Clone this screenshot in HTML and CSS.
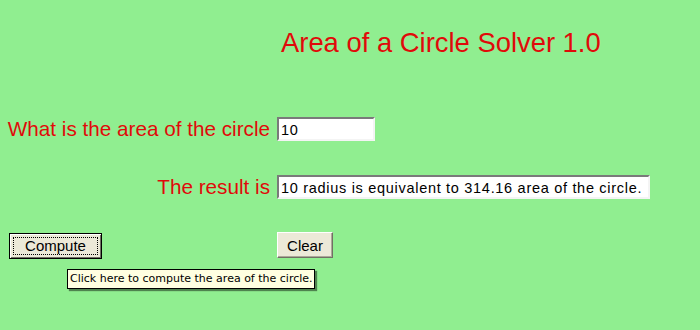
FILE: index.html
```html
<!DOCTYPE html>
<html>
<head>
<meta charset="utf-8">
<link rel="stylesheet" href="styles.css">
</head>
<body>
<div class="page">
  <h1 class="title">Area of a Circle Solver 1.0</h1>
  <div class="form">
    <label class="label label-q">What is the area of the circle</label>
    <div class="field"><input class="box box-short" type="text" value="10"></div>
    <label class="label label-r">The result is</label>
    <div class="field"><input class="box box-long" type="text" value="10 radius is equivalent to 314.16 area of the circle."></div>
  </div>
  <div class="buttons">
    <div class="left">
      <button class="btn btn-focus"><span class="focus">Compute</span></button>
      <div class="tooltip">Click here to compute the area of the circle.</div>
    </div>
    <button class="btn btn-clear">Clear</button>
  </div>
</div>
</body>
</html>
```
FILE: styles.css
```css
html, body {
  margin: 0;
  padding: 0;
  background: #90ee90;
  width: 700px;
  height: 330px;
  overflow: hidden;
}
.page {
  font-family: "Liberation Sans", Arial, sans-serif;
  color: #e00a0a;
}
.title {
  margin: 0;
  padding: 27px 0 0 281px;
  font-size: 27.4px;
  font-weight: normal;
  line-height: 32px;
}
.form {
  display: grid;
  grid-template-columns: 270px auto;
  column-gap: 7px;
  row-gap: 34px;
  align-items: center;
  margin-top: 58px;
}
.label {
  text-align: right;
  font-size: 20.7px;
  line-height: 24px;
}
.field {
  display: flex;
}
.box {
  box-sizing: border-box;
  height: 24px;
  border: 2px solid;
  border-color: #7a7a7a #f4f4f4 #f4f4f4 #7a7a7a;
  background: #fff;
  font-family: "Liberation Sans", Arial, sans-serif;
  font-size: 14.5px;
  letter-spacing: 0.7px;
  color: #000;
  padding: 1px 2px 0 2px;
  margin: 0;
  outline: none;
}
.box-short { width: 98px; }
.box-long { width: 373px; }
.buttons {
  display: flex;
  margin-top: 34px;
  padding-left: 9px;
}
.left {
  position: relative;
  width: 268px;
}
.btn {
  box-sizing: border-box;
  height: 26px;
  background: #ece9d8;
  font-family: "Liberation Sans", Arial, sans-serif;
  font-size: 15px;
  color: #000;
  margin: 0;
  padding: 0;
}
.btn-focus {
  width: 93px;
  border: 1px solid #000;
  box-shadow: inset 1px 1px 0 #fff, inset -1px -1px 0 #716f64;
  padding: 3px;
}
.focus {
  display: block;
  height: 100%;
  box-sizing: border-box;
  border: 1px dotted #000;
  line-height: 16px;
}
.btn-clear {
  width: 56px;
  border: 1px solid;
  border-color: #fff #716f64 #716f64 #fff;
  box-shadow: inset -1px -1px 0 #aca899;
  margin-top: -1px;
}
.tooltip {
  position: absolute;
  left: 58px;
  top: 36px;
  background: #ffffe1;
  border: 1px solid #000;
  box-shadow: 2px 2px 1px rgba(0,0,0,0.45);
  font-family: "DejaVu Sans", Tahoma, sans-serif;
  font-size: 11px;
  line-height: 18px;
  padding: 0 1px 0 2px;
  color: #000;
  white-space: nowrap;
}
```
